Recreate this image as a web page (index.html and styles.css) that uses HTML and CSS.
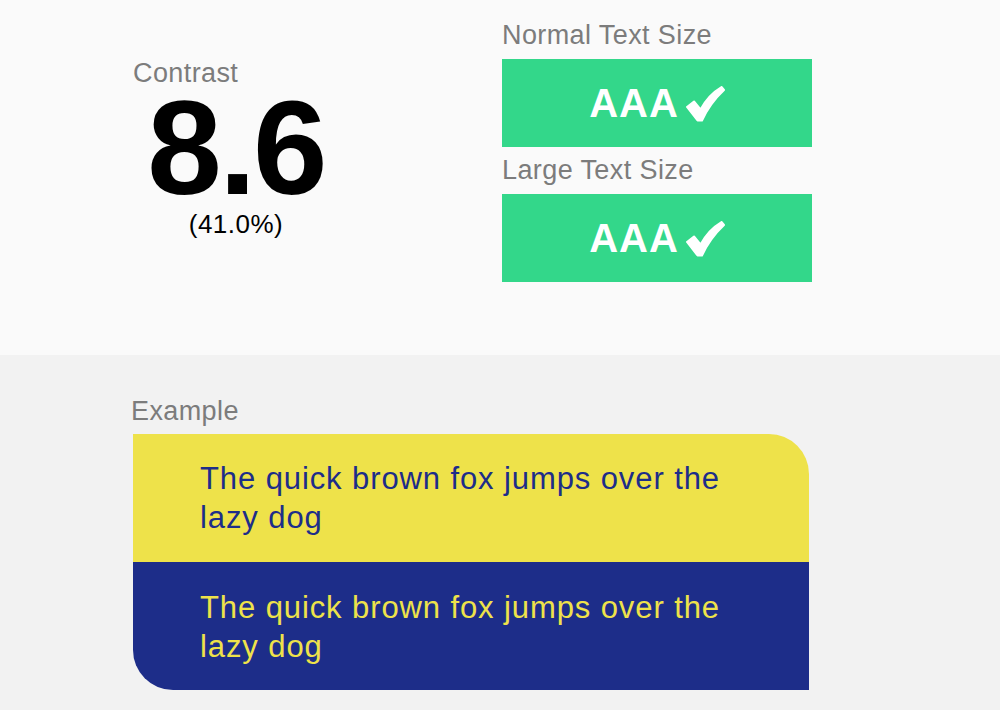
FILE: index.html
```html
<!DOCTYPE html>
<html lang="en">
<head>
<meta charset="utf-8">
<title>Contrast</title>
<link rel="stylesheet" href="styles.css">
</head>
<body>
  <section class="summary">
    <div class="score">
      <div class="label">Contrast</div>
      <div class="ratio">8.6</div>
      <div class="percent">(41.0%)</div>
    </div>
    <div class="levels">
      <div class="label">Normal Text Size</div>
      <div class="badge"><span>AAA</span><svg class="check" viewBox="0 0 40 36" aria-hidden="true"><path d="M2 21 L9 15.5 L15.5 23.5 C20.5 14 28 6 36.5 1 L39 4 C30.5 12 22.5 22.5 17 34.5 L12.5 34.5 Z"/></svg></div>
      <div class="label">Large Text Size</div>
      <div class="badge"><span>AAA</span><svg class="check" viewBox="0 0 40 36" aria-hidden="true"><path d="M2 21 L9 15.5 L15.5 23.5 C20.5 14 28 6 36.5 1 L39 4 C30.5 12 22.5 22.5 17 34.5 L12.5 34.5 Z"/></svg></div>
    </div>
  </section>
  <section class="example">
    <div class="label">Example</div>
    <div class="sample">
      <div class="sample-row light">The quick brown fox jumps over the lazy dog</div>
      <div class="sample-row dark">The quick brown fox jumps over the lazy dog</div>
    </div>
  </section>
</body>
</html>
```

FILE: styles.css
```css
* { box-sizing: border-box; }
html, body {
  margin: 0;
  padding: 0;
  height: 710px;
  overflow: hidden;
  font-family: "Liberation Sans", Arial, sans-serif;
  background: #f2f2f2;
}
.label {
  color: #7c7c7c;
  font-size: 27px;
  line-height: 30px;
  letter-spacing: 0.4px;
}
.summary {
  height: 355px;
  background: #fafafa;
  display: flex;
  align-items: flex-start;
  padding-left: 133px;
}
.score {
  width: 206px;
  margin-top: 58px;
  margin-right: 163px;
  display: flex;
  flex-direction: column;
}
.ratio {
  font-size: 134px;
  line-height: 120px;
  font-weight: 700;
  color: #000;
  text-align: center;
  letter-spacing: -3px;
}
.percent {
  margin-top: 2px;
  font-size: 26px;
  line-height: 28px;
  color: #000;
  text-align: center;
  letter-spacing: 0.5px;
}
.levels {
  width: 310px;
  margin-top: 20px;
  display: flex;
  flex-direction: column;
}
.levels .label { margin-bottom: 9px; }
.badge {
  height: 88px;
  margin-bottom: 8px;
  background: #33d78a;
  color: #fff;
  font-weight: 700;
  font-size: 40px;
  letter-spacing: 1px;
  display: flex;
  align-items: center;
  justify-content: center;
  gap: 6px;
}
.check {
  width: 40px;
  height: 36px;
  fill: #fff;
  stroke: #fff;
  stroke-width: 2;
  stroke-linejoin: round;
  margin-top: 2px;
}
.example {
  padding: 41px 0 0 131px;
}
.example .label { margin-bottom: 8px; }
.sample {
  width: 676px;
  margin-left: 2px;
  border-radius: 0 40px 0 40px;
  overflow: hidden;
}
.sample-row {
  height: 128px;
  padding: 25px 60px 0 67px;
  font-size: 31px;
  line-height: 39px;
  letter-spacing: 0.9px;
}
.light { background: #eee24a; color: #1d2d89; }
.dark { background: #1d2d89; color: #eee24a; padding-top: 26px; }
```
